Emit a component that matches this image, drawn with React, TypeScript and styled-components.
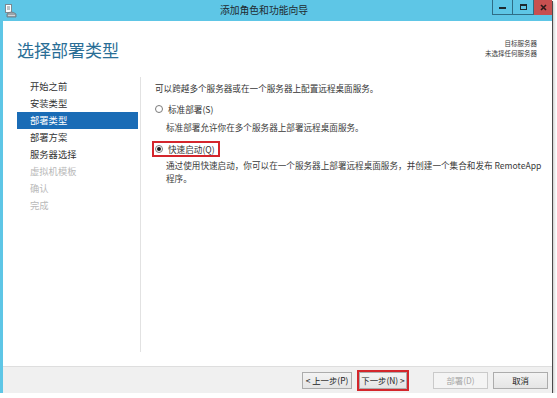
import React from "react";
import styled, { createGlobalStyle, css } from "styled-components";

const GlobalStyle = createGlobalStyle`
  html, body {
    margin: 0;
    padding: 0;
    background: #fff;
    font-family: "Noto Sans CJK SC", "Noto Sans", "Liberation Sans", sans-serif;
  }
`;

const Window = styled.div`
  width: 552px;
  height: 393px;
  display: flex;
  flex-direction: column;
  background: #fff;
  border-left: 3px solid #5ec6e6;
  box-sizing: border-box;
  box-shadow: 1px 1px 0 #4a4a4a, 2px 2px 3px rgba(0, 0, 0, 0.25);
`;

const TitleBar = styled.div`
  height: 21px;
  flex: none;
  display: flex;
  align-items: flex-start;
  background: #5ec6e6;
  margin-left: -3px;
`;

const AppIcon = styled.div`
  width: 20px;
  height: 21px;
  display: flex;
  align-items: center;
  justify-content: center;
  padding-left: 2px;
  box-sizing: border-box;
`;

const Title = styled.div`
  flex: 1;
  text-align: center;
  padding-left: 16px;
  font-size: 9.8px;
  line-height: 21px;
  color: #1e2a30;
`;

const Controls = styled.div`
  display: flex;
  height: 15px;
`;

const CtrlButton = styled.div<{ $w: number; $close?: boolean }>`
  width: ${({ $w }) => $w}px;
  height: 15px;
  box-sizing: border-box;
  display: flex;
  align-items: center;
  justify-content: center;
  ${({ $close }) =>
    $close
      ? css`
          background: #c75050;
        `
      : css`
          border: 1px solid #2f6d86;
          border-top: none;
          & + & {
            border-left: none;
          }
        `}
`;

const Header = styled.div`
  height: 56px;
  flex: none;
  display: flex;
  justify-content: space-between;
  align-items: flex-start;
  padding: 17px 15px 0 14px;
  box-sizing: border-box;
`;

const PageTitle = styled.h1`
  margin: 2px 0 0;
  font-size: 17px;
  line-height: 20px;
  font-weight: normal;
  color: #2a6e96;
`;

const TargetInfo = styled.div`
  text-align: right;
  font-size: 6.5px;
  line-height: 10px;
  color: #3a3a3a;
`;

const Body = styled.div`
  flex: 1;
  display: flex;
  padding-bottom: 14px;
  min-height: 0;
`;

const Nav = styled.ul`
  list-style: none;
  margin: 0 0 0 14px;
  padding: 1px 0 0;
  width: 121px;
  flex: none;
`;

const NavItem = styled.li<{ $state: "done" | "active" | "off" }>`
  height: 17px;
  line-height: 17px;
  padding-left: 13px;
  font-size: 9.3px;
  color: ${({ $state }) => ($state === "off" ? "#b9b9b9" : $state === "active" ? "#fff" : "#333")};
  background: ${({ $state }) => ($state === "active" ? "#1a6cb6" : "transparent")};
`;

const Main = styled.div`
  flex: 1;
  margin-left: 2px;
  border-left: 1px solid #e2e2e2;
  padding: 5px 0 0 14px;
  font-size: 8.6px;
  color: #333;
`;

const Lead = styled.p`
  margin: 0;
  line-height: 12px;
`;

const OptionRow = styled.label<{ $marked?: boolean }>`
  display: flex;
  align-items: center;
  gap: 5px;
  height: 12px;
  line-height: 12px;
  margin-top: 9px;
  ${({ $marked }) =>
    $marked &&
    css`
      display: inline-flex;
      margin-top: 7px;
      margin-left: -3px;
      border: 2px solid #d4262c;
      padding: 0 3px 0 1px;
    `}
`;

const Radio = styled.span<{ $checked?: boolean }>`
  width: 8px;
  height: 8px;
  box-sizing: border-box;
  border-radius: 50%;
  border: 1px solid #7a7a7a;
  background: #fff;
  display: flex;
  align-items: center;
  justify-content: center;
  &::after {
    content: "";
    width: 4px;
    height: 4px;
    border-radius: 50%;
    background: ${({ $checked }) => ($checked ? "#1b1b1b" : "transparent")};
  }
`;

const Desc = styled.p<{ $gap: number }>`
  margin: ${({ $gap }) => $gap}px 0 0 11px;
  line-height: 13px;
  color: #3a3a3a;
`;

const Footer = styled.div`
  height: 27px;
  flex: none;
  box-sizing: border-box;
  border-top: 1px solid #dedede;
  background: #f0f0f0;
  display: flex;
  justify-content: flex-end;
  align-items: center;
  padding-right: 4px;
`;

const Button = styled.button<{ $w: number; $gap: number; $marked?: boolean }>`
  width: ${({ $w }) => $w}px;
  margin-left: ${({ $gap }) => $gap}px;
  height: 17px;
  padding: 0;
  box-sizing: border-box;
  white-space: nowrap;
  overflow: visible;
  border: 1px solid #acacac;
  background: linear-gradient(#f3f3f3, #e5e5e5);
  font-family: inherit;
  font-size: 8.4px;
  color: #222;
  &:disabled {
    color: #a6a6a6;
    border-color: #cacaca;
    background: #f4f4f4;
  }
  ${({ $marked }) =>
    $marked &&
    css`
      outline: 2px solid #d4262c;
      outline-offset: 0;
    `}
`;

const navItems: { label: string; state: "done" | "active" | "off" }[] = [
  { label: "开始之前", state: "done" },
  { label: "安装类型", state: "done" },
  { label: "部署类型", state: "active" },
  { label: "部署方案", state: "done" },
  { label: "服务器选择", state: "done" },
  { label: "虚拟机模板", state: "off" },
  { label: "确认", state: "off" },
  { label: "完成", state: "off" },
];

export default function App() {
  return (
    <>
      <GlobalStyle />
      <Window>
        <TitleBar>
          <AppIcon>
            <svg width="12" height="14" viewBox="0 0 12 14">
              <rect x="0.5" y="0.5" width="6" height="8" fill="#fff" stroke="#7b8a92" />
              <line x1="2" y1="3" x2="5" y2="3" stroke="#7b8a92" />
              <line x1="2" y1="5" x2="5" y2="5" stroke="#7b8a92" />
              <path d="M2 13 L2 10 Q6 6 11 10 L11 13 Z" fill="#9aa4aa" stroke="#6d777d" strokeWidth="0.8" />
              <line x1="3" y1="11.5" x2="10" y2="11.5" stroke="#dfe5e8" strokeWidth="0.8" />
            </svg>
          </AppIcon>
          <Title>添加角色和功能向导</Title>
          <Controls>
            <CtrlButton $w={21}>
              <svg width="7" height="6" viewBox="0 0 7 6">
                <rect x="0" y="3" width="7" height="2" fill="#1d2a30" />
              </svg>
            </CtrlButton>
            <CtrlButton $w={21}>
              <svg width="7" height="6" viewBox="0 0 7 6">
                <rect x="0.5" y="0.5" width="6" height="5" fill="none" stroke="#1d2a30" />
                <rect x="0" y="0" width="7" height="2" fill="#1d2a30" />
              </svg>
            </CtrlButton>
            <CtrlButton $w={18} $close>
              <svg width="7" height="7" viewBox="0 0 7 7">
                <path d="M1 1 L6 6 M6 1 L1 6" stroke="#2a1a1a" strokeWidth="1.6" />
              </svg>
            </CtrlButton>
          </Controls>
        </TitleBar>

        <Header>
          <PageTitle>选择部署类型</PageTitle>
          <TargetInfo>
            目标服务器
            <br />
            未选择任何服务器
          </TargetInfo>
        </Header>

        <Body>
          <Nav>
            {navItems.map((item) => (
              <NavItem key={item.label} $state={item.state}>
                {item.label}
              </NavItem>
            ))}
          </Nav>
          <Main>
            <Lead>可以跨越多个服务器或在一个服务器上配置远程桌面服务。</Lead>
            <OptionRow>
              <Radio />
              标准部署(S)
            </OptionRow>
            <Desc $gap={6}>标准部署允许你在多个服务器上部署远程桌面服务。</Desc>
            <OptionRow $marked>
              <Radio $checked />
              快速启动(Q)
            </OptionRow>
            <Desc $gap={2}>
              通过使用快速启动，你可以在一个服务器上部署远程桌面服务，并创建一个集合和发布 RemoteApp
              <br />
              程序。
            </Desc>
          </Main>
        </Body>

        <Footer>
          <Button $w={50} $gap={0}>&lt; 上一步(P)</Button>
          <Button $w={48} $gap={7} $marked>
            下一步(N) &gt;
          </Button>
          <Button $w={55} $gap={26} disabled>
            部署(D)
          </Button>
          <Button $w={55} $gap={5}>取消</Button>
        </Footer>
      </Window>
    </>
  );
}
